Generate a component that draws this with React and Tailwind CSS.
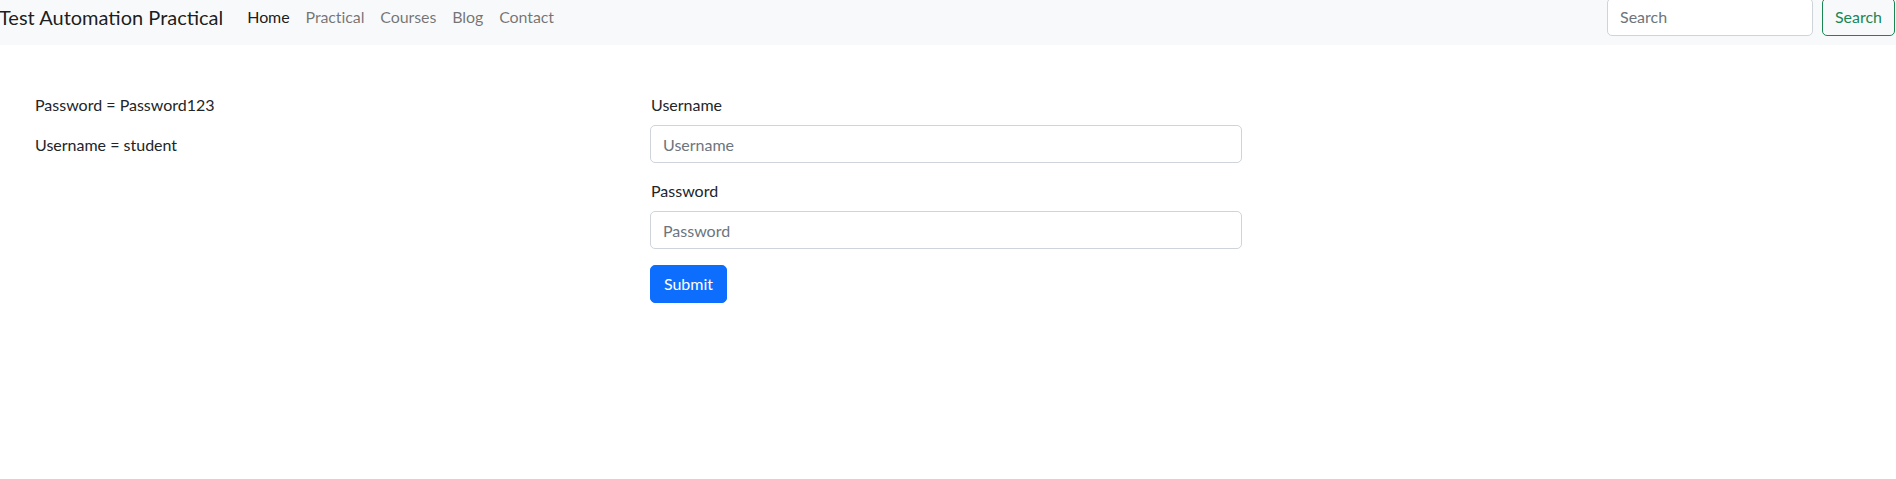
export default function App() {
  const font = { fontFamily: 'Lato, "Open Sans", sans-serif' };
  return (
    <div className="min-h-screen bg-white text-[#212529] text-[16px] leading-[24px]" style={font}>
      {/* navbar */}
      <nav className="h-[45px] bg-[#f8f9fa] flex items-center justify-between pb-[12px] pr-[1px]">
        <div className="flex items-center">
          <span className="text-[20px] leading-[30px] text-[rgba(0,0,0,0.9)] mr-[16px] -ml-[1px]">Test Automation Practical</span>
          <ul className="flex items-center tracking-[-0.1px]">
            <li><a className="block px-2 text-[rgba(0,0,0,0.9)]" href="#">Home</a></li>
            <li><a className="block px-2 text-[rgba(0,0,0,0.55)]" href="#">Practical</a></li>
            <li><a className="block px-2 text-[rgba(0,0,0,0.55)]" href="#">Courses</a></li>
            <li><a className="block px-2 text-[rgba(0,0,0,0.55)]" href="#">Blog</a></li>
            <li><a className="block px-2 text-[rgba(0,0,0,0.55)]" href="#">Contact</a></li>
          </ul>
        </div>
        <form className="flex items-center" onSubmit={(e) => e.preventDefault()}>
          <input
            type="search"
            placeholder="Search"
            className="w-[206px] h-[38px] px-3 bg-white border border-[#ced4da] rounded-[5px] placeholder:text-[#6c757d] outline-none mr-[9px]"
          />
          <button className="h-[38px] w-[73px] border border-[#198754] text-[#198754] rounded-[5px]">Search</button>
        </form>
      </nav>

      {/* content */}
      <div className="flex pt-[48px]">
        <div className="w-[650px] pl-[35px]">
          <p className="mb-4">Password = Password123</p>
          <p className="mb-4">Username = student</p>
        </div>
        <form className="w-[592px]" onSubmit={(e) => e.preventDefault()}>
          <div className="mb-4">
            <label className="block mb-2 pl-[1px]">Username</label>
            <input
              type="text"
              placeholder="Username"
              className="block w-full h-[38px] px-3 border border-[#ced4da] rounded-[5px] placeholder:text-[#6c757d] outline-none"
            />
          </div>
          <div className="mb-4">
            <label className="block mb-2 pl-[1px]">Password</label>
            <input
              type="password"
              placeholder="Password"
              className="block w-full h-[38px] px-3 border border-[#ced4da] rounded-[5px] placeholder:text-[#6c757d] outline-none"
            />
          </div>
          <button className="h-[38px] w-[77px] bg-[#0d6efd] border border-[#0d6efd] text-white rounded-[5px]">Submit</button>
        </form>
      </div>
    </div>
  );
}
